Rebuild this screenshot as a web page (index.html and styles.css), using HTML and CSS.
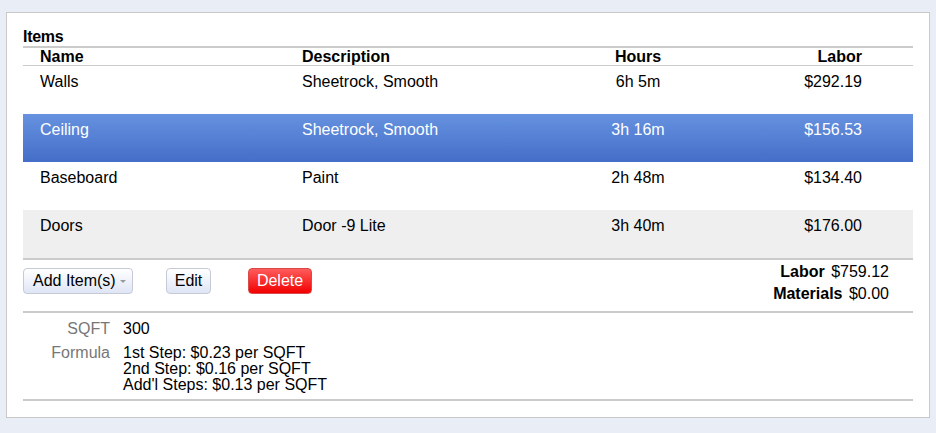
FILE: index.html
```html
<!DOCTYPE html>
<html>
<head>
<meta charset="utf-8">
<link rel="stylesheet" href="styles.css">
</head>
<body>
<div class="panel">
  <div class="title">Items</div>
  <div class="table">
    <div class="row head">
      <div class="c name">Name</div>
      <div class="c desc">Description</div>
      <div class="c hours">Hours</div>
      <div class="c labor">Labor</div>
    </div>
    <div class="row">
      <div class="c name">Walls</div>
      <div class="c desc">Sheetrock, Smooth</div>
      <div class="c hours">6h 5m</div>
      <div class="c labor">$292.19</div>
    </div>
    <div class="row selected">
      <div class="c name">Ceiling</div>
      <div class="c desc">Sheetrock, Smooth</div>
      <div class="c hours">3h 16m</div>
      <div class="c labor">$156.53</div>
    </div>
    <div class="row">
      <div class="c name">Baseboard</div>
      <div class="c desc">Paint</div>
      <div class="c hours">2h 48m</div>
      <div class="c labor">$134.40</div>
    </div>
    <div class="row alt">
      <div class="c name">Doors</div>
      <div class="c desc">Door -9 Lite</div>
      <div class="c hours">3h 40m</div>
      <div class="c labor">$176.00</div>
    </div>
  </div>
  <div class="actions">
    <div class="buttons">
      <button class="btn add">Add Item(s) <span class="caret"></span></button>
      <button class="btn edit">Edit</button>
      <button class="btn delete">Delete</button>
    </div>
    <div class="totals">
      <div class="tline"><b>Labor</b> $759.12</div>
      <div class="tline"><b>Materials</b> $0.00</div>
    </div>
  </div>
  <div class="details">
    <div class="drow">
      <div class="dlabel">SQFT</div>
      <div class="dval">300</div>
    </div>
    <div class="drow">
      <div class="dlabel">Formula</div>
      <div class="dval">1st Step: $0.23 per SQFT<br>2nd Step: $0.16 per SQFT<br>Add'l Steps: $0.13 per SQFT</div>
    </div>
  </div>
</div>
</body>
</html>
```
FILE: styles.css
```css
html, body {
  margin: 0;
  padding: 0;
}
body {
  background: #e9edf6;
  font-family: "Liberation Sans", Arial, Helvetica, sans-serif;
  font-size: 16px;
  color: #000;
  padding-top: 12px;
  height: 433px;
  box-sizing: border-box;
  overflow: hidden;
}
.panel {
  margin-left: 6px;
  width: 924px;
  height: 406px;
  box-sizing: border-box;
  background: #fff;
  border: 1px solid #c9c9c9;
  padding: 15px 16px 0 16px;
}
.title {
  font-weight: bold;
  font-size: 16px;
  line-height: 18px;
  height: 18px;
  letter-spacing: -0.3px;
}
.table {
  border-top: 2px solid #cbcbcb;
  border-bottom: 2px solid #cbcbcb;
}
.row {
  display: grid;
  grid-template-columns: 279px 261px 150px 201px;
  height: 48px;
  box-sizing: border-box;
  padding-top: 7px;
  line-height: 18px;
}
.row.head {
  height: 18px;
  padding-top: 0;
  line-height: 17px;
  font-weight: bold;
  border-bottom: 1px solid #cbcbcb;
}
.c.name { padding-left: 17px; }
.c.hours { text-align: center; }
.c.labor { text-align: right; padding-right: 52px; }
.row.selected {
  background: linear-gradient(#6692e0, #446ec8);
  color: #fff;
}
.row.alt {
  background: #efefef;
}
.actions {
  display: flex;
  justify-content: space-between;
  height: 51px;
  border-bottom: 2px solid #cbcbcb;
}
.buttons {
  display: flex;
  align-items: flex-start;
  padding-top: 8px;
}
.btn {
  font-family: "Liberation Sans", Arial, Helvetica, sans-serif;
  font-size: 16px;
  height: 26px;
  box-sizing: border-box;
  border-radius: 4px;
  border: 1px solid #c5cad6;
  background: linear-gradient(#ffffff, #dfe5f5);
  color: #000;
  padding: 0 8px;
  line-height: 24px;
  margin: 0;
}
.btn.add {
  width: 110px;
  padding: 0 0 0 9px;
  text-align: left;
  white-space: nowrap;
}
.caret {
  display: inline-block;
  width: 0;
  height: 0;
  border-left: 3px solid transparent;
  border-right: 3px solid transparent;
  border-top: 3px solid #999;
  vertical-align: middle;
  margin-left: 0;
}
.btn.edit {
  width: 45px;
  margin-left: 33px;
  padding: 0;
  text-align: center;
}
.btn.delete {
  width: 64px;
  margin-left: 37px;
  padding: 0;
  text-align: center;
  color: #fff;
  border-color: #d94a4a;
  background: linear-gradient(#ff5c5c, #f10000);
}
.totals {
  padding-top: 1px;
  padding-right: 24px;
  text-align: right;
}
.tline {
  line-height: 22px;
}
.tline b {
  margin-right: 2px;
}
.details {
  padding-top: 8px;
  padding-bottom: 6px;
  border-bottom: 2px solid #cbcbcb;
}
.drow {
  display: flex;
  line-height: 16px;
  margin-bottom: 8px;
}
.drow:last-child {
  margin-bottom: 0;
}
.dlabel {
  width: 87px;
  text-align: right;
  color: #777;
  margin-right: 13px;
}
```
